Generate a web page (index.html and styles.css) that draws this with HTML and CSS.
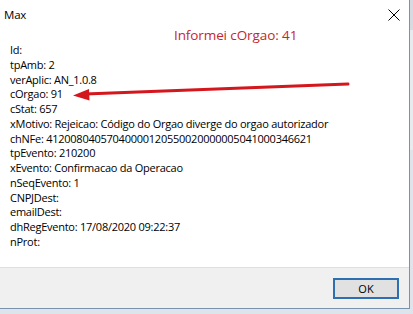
FILE: index.html
```html
<!DOCTYPE html>
<html>
<head>
<title>Max</title>
<link rel="stylesheet" href="styles.css">
</head>
<body>

<div class="desktop">
  <div class="dialog">
    <div class="titlebar">
      <span class="title">Max</span>
      <span class="close">
        <svg width="12" height="12" viewBox="0 0 12 12"><path d="M0.5 0.5 L11.5 11.5 M11.5 0.5 L0.5 11.5" stroke="#000" stroke-width="1"/></svg>
      </span>
    </div>

    <div class="content">
      <div class="note">Informei cOrgao: 41</div>
      <ul class="fields">
        <li>Id:</li>
        <li>tpAmb: 2</li>
        <li>verAplic: AN_1.0.8</li>
        <li>cOrgao: 91</li>
        <li>cStat: 657</li>
        <li>xMotivo: Rejeicao: Código do Orgao diverge do orgao autorizador</li>
        <li>chNFe: 41200804057040000120550020000005041000346621</li>
        <li>tpEvento: 210200</li>
        <li>xEvento: Confirmacao da Operacao</li>
        <li>nSeqEvento: 1</li>
        <li>CNPJDest:</li>
        <li>emailDest:</li>
        <li>dhRegEvento: 17/08/2020 09:22:37</li>
        <li>nProt:</li>
      </ul>
      <!-- hand drawn arrow over the text -->
      <svg class="arrow" width="300" height="30" viewBox="0 0 300 30">
        <path d="M277 3 L14 13" stroke="#d4161d" stroke-width="3" stroke-linecap="round"/>
        <path d="M2 14.5 L18 8 L18.5 19.5 Z" fill="#d4161d"/>
      </svg>
    </div>

    <div class="footer">
      <button class="ok">OK</button>
    </div>
  </div>
  <div class="behind"></div>
</div>

</body>
</html>
```

FILE: styles.css
```css
body {
  margin: 0;
  font-family: "Open Sans", sans-serif;
  font-size: 11px;
  color: #000;
  background: #dde4ec;
}

.desktop {
  display: flex;
  width: 413px;
  height: 314px;
  overflow: hidden;
}

.dialog {
  width: 409px;
  height: 308px;
  display: flex;
  flex-direction: column;
  background: #fff;
  border-right: 1px solid #7a93ad;
  border-bottom: 1px solid #7a93ad;
}

.behind {
  flex: 1;
  height: 120px;
  background: #e6ebf0;
  border-top: 30px solid #d5dbe2;
}

/* Title bar */
.titlebar {
  height: 29px;
  display: flex;
  align-items: center;
  justify-content: space-between;
  padding: 0 9px 0 4px;
}

.title {
  font-size: 11.5px;
  letter-spacing: -0.2px;
}

.close {
  display: flex;
  margin-top: 1px;
}

/* Message area */
.content {
  flex: 1;
  position: relative;
  padding: 0 10px;
}

.note {
  color: #c4272b;
  font-size: 13.5px;
  letter-spacing: -0.1px;
  padding-left: 164px;
  height: 16px;
  line-height: 16px;
  margin-top: -2px;
}

.fields {
  list-style: none;
  margin: 0;
  padding: 0;
  line-height: 14.77px;
  letter-spacing: -0.25px;
}

.arrow {
  position: absolute;
  left: 71px;
  top: 52px;
}

/* Button strip */
.footer {
  height: 40px;
  background: #f0f0f0;
  border-top: 1px solid #dfdfdf;
  display: flex;
  align-items: center;
  justify-content: flex-end;
  padding-right: 10px;
}

.ok {
  width: 66px;
  height: 21px;
  font-family: "Open Sans", sans-serif;
  font-size: 11px;
  background: #e1e1e1;
  border: 2px solid #2d6fb0;
  padding: 0;
}
```
